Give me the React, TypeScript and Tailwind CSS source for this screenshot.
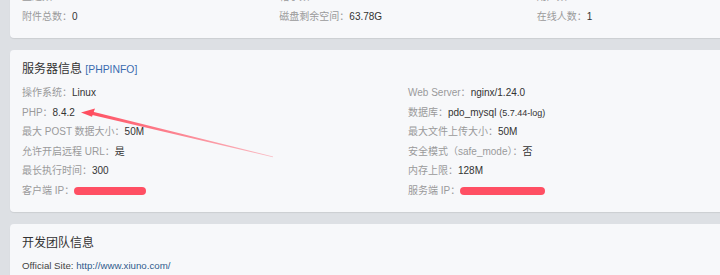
import type { ReactNode } from 'react'

type Row = { label: string; value: ReactNode }

function Scribble({ w }: { w: number }) {
  return (
    <span
      className="inline-block h-[8px] rounded-full bg-[#ff4f63] align-middle"
      style={{ width: w }}
    />
  )
}

function Item({ label, value }: Row) {
  return (
    <div className="leading-[19.5px] h-[19.5px] whitespace-nowrap">
      <span className="text-[#9a9a9a]">{label}</span>
      <span className="text-[#333]">{value}</span>
    </div>
  )
}

function Card({ children, className = '' }: { children: ReactNode; className?: string }) {
  return (
    <div className={`w-[796px] rounded-[4px] bg-[#f7f8fa] px-[12px] shadow-[0_1px_1px_rgba(0,0,0,0.08)] ${className}`}>
      {children}
    </div>
  )
}

const stats: Row[] = [
  { label: '主题数：', value: '1' },
  { label: '帖子数：', value: '1' },
  { label: '用户数：', value: <span className="text-[#ff4f63]">1</span> },
  { label: '附件总数：', value: '0' },
  { label: '磁盘剩余空间：', value: '63.78G' },
  { label: '在线人数：', value: '1' },
]

const server: Row[] = [
  { label: '操作系统：', value: 'Linux' },
  { label: 'Web Server：', value: 'nginx/1.24.0' },
  { label: 'PHP：', value: '8.4.2' },
  {
    label: '数据库：',
    value: (
      <>
        pdo_mysql <span className="text-[9px]">(5.7.44-log)</span>
      </>
    ),
  },
  { label: '最大 POST 数据大小：', value: '50M' },
  { label: '最大文件上传大小：', value: '50M' },
  { label: '允许开启远程 URL：', value: '是' },
  { label: '安全模式（safe_mode）：', value: '否' },
  { label: '最长执行时间：', value: '300' },
  { label: '内存上限：', value: '128M' },
  { label: '客户端 IP：', value: <Scribble w={72} /> },
  { label: '服务端 IP：', value: <Scribble w={85} /> },
]

export default function App() {
  return (
    <div className="relative w-[720px] h-[275px] overflow-hidden bg-[#dde0e4] text-[10px] font-['Liberation_Sans','Arial','Noto_Sans_CJK_SC',sans-serif]">
      <div className="flex flex-col gap-[12px] px-[10px] -mt-[25px]">
        <Card className="py-[12px]">
          <div className="grid grid-cols-3">
            {stats.map((r) => (
              <Item key={r.label} {...r} />
            ))}
          </div>
        </Card>

        <Card className="pt-[9px] pb-[12px]">
          <div className="leading-[20px] text-[12px] text-[#333]">
            服务器信息 <a className="text-[10.4px] text-[#3a6cb0]">[PHPINFO]</a>
          </div>
          <div className="mt-[3px] grid grid-cols-2">
            {server.map((r) => (
              <Item key={r.label} {...r} />
            ))}
          </div>
        </Card>

        <Card className="pt-[9px] pb-[12px]">
          <div className="leading-[20px] text-[12px] text-[#333]">开发团队信息</div>
          <div className="mt-[3px] leading-[19.5px] text-[9.7px] text-[#444]">
            Official Site: <a className="text-[#2f5b8c]">http://www.xiuno.com/</a>
          </div>
        </Card>
      </div>

      {/* red annotation arrow */}
      <svg className="pointer-events-none absolute left-0 top-0" width="720" height="275">
        <defs>
          <linearGradient id="fade" x1="81" y1="112" x2="273" y2="157" gradientUnits="userSpaceOnUse">
            <stop offset="0" stopColor="#ff4d5f" />
            <stop offset="1" stopColor="#ff4d5f" stopOpacity="0.35" />
          </linearGradient>
        </defs>
        <polygon points="90,111 273,156.6 273,157.2 89,114.2" fill="url(#fade)" />
        <polygon points="81,112.5 95,108.5 92,116.8" fill="#ff4d5f" />
      </svg>
    </div>
  )
}
